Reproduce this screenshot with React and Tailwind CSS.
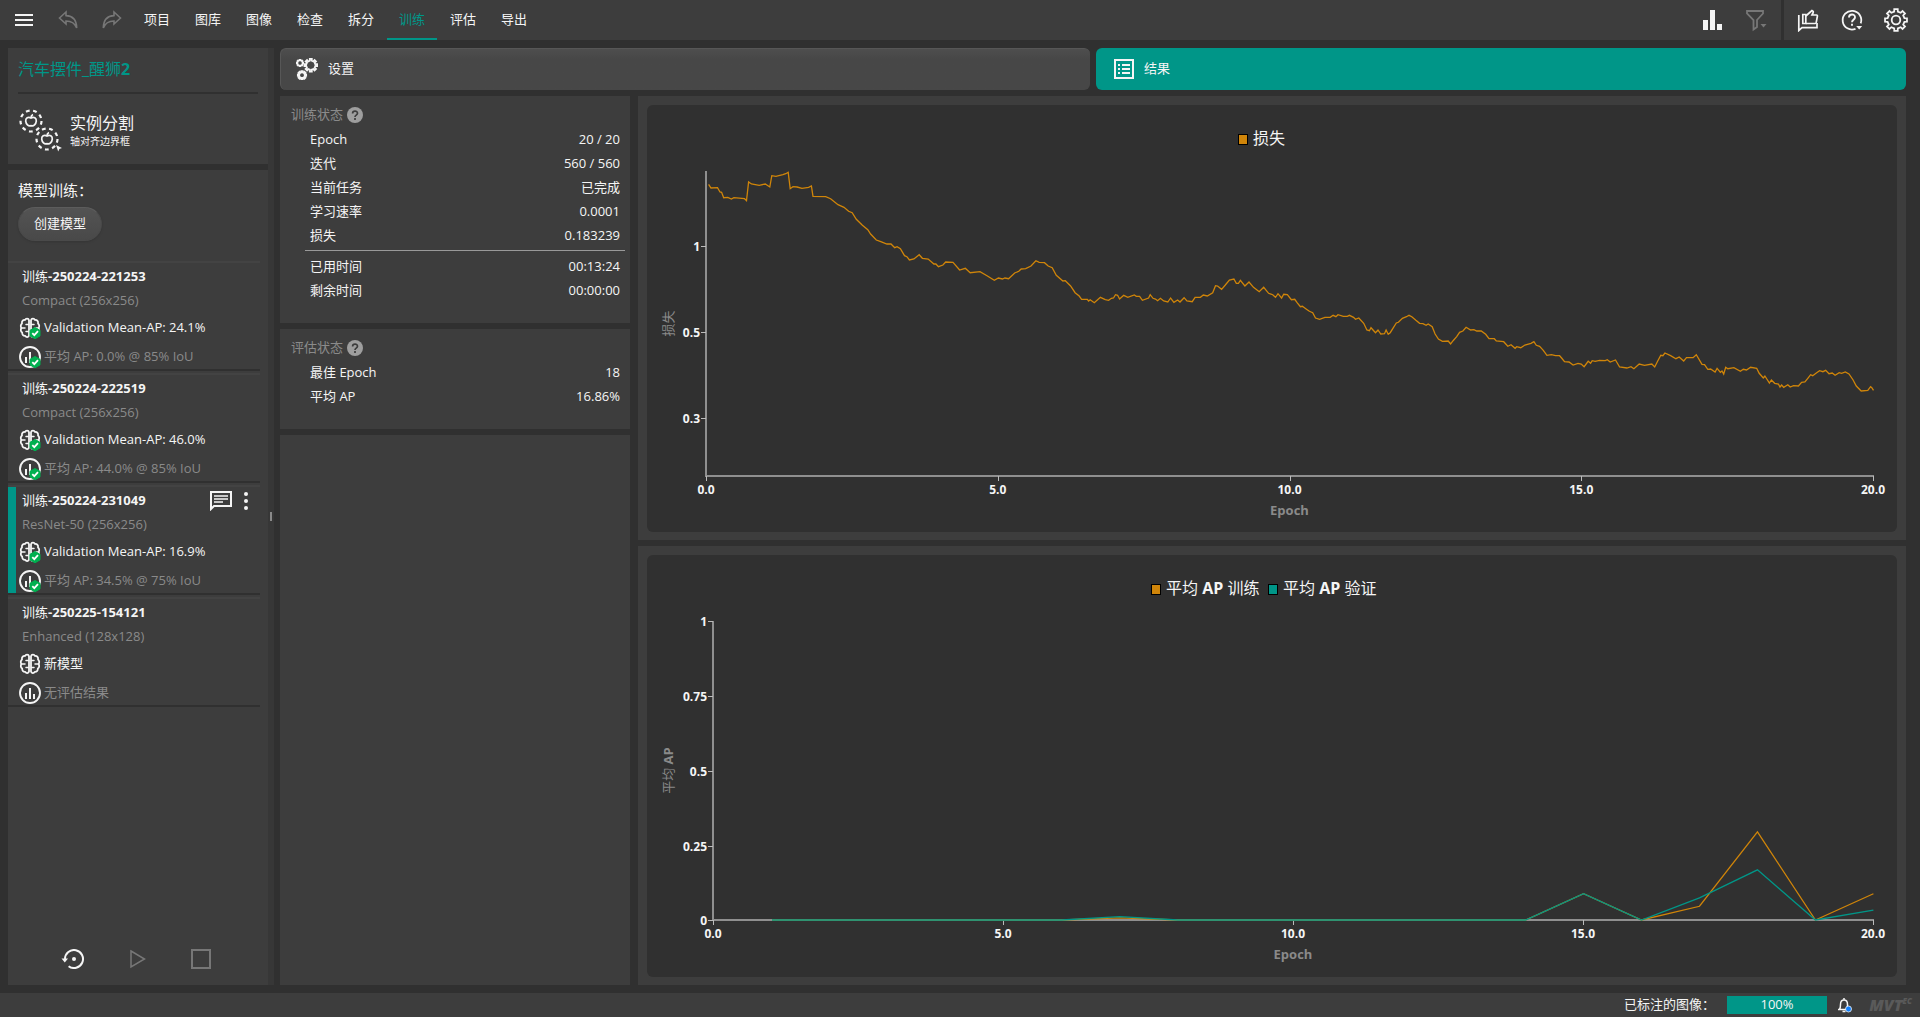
import React from 'react';

const models = [
    { id: '-250224-221253', net: 'Compact (256x256)', best: 'Validation Mean-AP: 24.1%', evaluation: '平均 AP: 0.0% @ 85% IoU', done: true },
    { id: '-250224-222519', net: 'Compact (256x256)', best: 'Validation Mean-AP: 46.0%', evaluation: '平均 AP: 44.0% @ 85% IoU', done: true },
    { id: '-250224-231049', net: 'ResNet-50 (256x256)', best: 'Validation Mean-AP: 16.9%', evaluation: '平均 AP: 34.5% @ 75% IoU', done: true, selected: true },
    { id: '-250225-154121', net: 'Enhanced (128x128)', best: '新模型', evaluation: '无评估结果', done: false },
];

const navItems = ['项目', '图库', '图像', '检查', '拆分', '训练', '评估', '导出'];

const trainingRows = [
    ['Epoch', '20 / 20'],
    ['迭代', '560 / 560'],
    ['当前任务', '已完成'],
    ['学习速率', '0.0001'],
    ['损失', '0.183239'],
];

const timeRows = [
    ['已用时间', '00:13:24'],
    ['剩余时间', '00:00:00'],
];

const evaluationRows = [
    ['最佳 Epoch', '18'],
    ['平均 AP', '16.86%'],
];

// Smoothed loss per iteration, already projected on the log scale
const lossPoints = `61.6,79.3 64,83 70.5,82.7 73,87 74.6,87.3 76.7,92.7 80.8,92.3 84.4,94 86.9,92.7 97.5,93.7 99.5,95.7
101.6,77 104.4,79 112.2,80.3 118.3,79 122.8,82 124.8,70.7 128.9,71.3 135.9,69.7 138.7,68.7 141.2,67.3 143.2,83.7
146,81.7 150.1,82 155,83.3 161.6,82.3 164.4,81 166,91.3 178.7,91.7 183.6,93.7 191,99.7 197,102.3 201.6,106.3
205.2,107.7 209.3,114.3 215.4,120.3 220.8,124.7 223.6,129 229.3,135 233.8,136.7 239.9,139 244,139 247.7,142.7
250.1,141.7 253.4,143.7 257.5,150.7 259.9,151.7 262.4,155 266.9,154 272.2,149.7 275.4,153.3 281.2,154 286.9,159
288.9,159 291.4,161.7 295.9,160 298.7,157 306,157.3 312.6,165 318.3,163.3 323.2,167.7 333,166.7 340,170.7
347.3,175.3 351.4,173 355.4,174 357.9,173 361.6,173.7 367.7,168 371.8,166.3 374.2,164 378.7,163.7 384,161
388.9,155.7 392.2,157.3 397.5,157.7 401.2,161 405.2,162.7 409.3,170.3 415.9,176 418.3,175.7 423.6,181 428.1,187.7
432.2,191 434.6,194.3 440.3,194.3 441.6,196 443.2,194.7 447.3,197.7 453.4,192.3 458.3,194.7 461.6,195.3 464.4,193.3
466.5,193 468.5,189.7 470.6,190.3 472.6,194 476.7,190.3 480.8,192.3 487.3,190 489.3,191.3 492.6,191.3 495.4,195.3
501.6,193 503.2,189.7 506,193.3 508.5,194 510.6,195.7 513.4,193.3 516.7,196 520.8,197 523.6,193 526.9,197.3
530.6,195 533,197 537.1,192.7 539.9,196 545.2,196.7 548.1,192.3 553.4,192.3 556.3,190 560.3,191 565.7,187.7
568.5,180.7 570.6,181 574.6,184.3 578.3,180 582.4,175 586.9,174 589.3,178.3 591.4,178.3 593.4,175.3 597.9,181
602,177 606.5,182.3 612.2,186.7 616.7,182.3 621.6,188.3 625.7,189.7 628.5,192.3 631,188.7 634.6,193 636.7,189.3
640.3,189.7 644.4,194.7 647.7,194.3 650.1,197.7 653.4,201.7 655.4,201.3 659.1,204 662.4,206.3 665.7,207.7 668.5,213
672.6,214.3 677.9,212.3 683.2,212.3 686.1,210.3 688.9,211.7 691,209.7 696.3,211.3 700.3,211.3 702.4,210.3
706.5,212.3 708.5,214.3 711.8,213 716.7,218.3 719.9,225 722.4,225.7 724,222.7 728.5,227.7 731,225 733.8,229
737.5,228.7 739.1,225 741.2,229.3 743.2,227.7 749.3,218 751.4,217.3 755.4,213.3 759.5,211.7 762,210.3 764.8,211.7
768.9,215.3 772.6,218.3 775.9,218.7 779.1,220.3 781.2,219 785.2,221.7 788.1,229 791.4,234 795.4,236.3 801.2,236
803.6,239 806.1,235.7 809.7,231.7 812.6,227.3 815.9,226 819.1,222.3 823.6,225 826.9,224.7 829.7,226 834.2,226
838.7,229.3 842,233.7 847.3,233.7 849.3,236 856.7,236.7 860.8,241.3 864,239.7 868.1,243.3 869.7,241.7 873.8,242.7
877.9,240 884,238.3 886.9,236.7 889.3,240.3 892.6,241.3 896.3,245.3 899.9,250.3 904.4,249.7 908.5,250.7 912.6,250.7
914.6,253 917.5,256.7 922,257 926.1,260 931,258.3 934.2,259 937.1,261.7 941.2,256.3 943.6,258.3 945.2,255.7
948.1,256.3 952.6,255.3 958.3,255.7 960.3,254.7 963.2,257 968.5,255 972.6,262 979.9,263 984,261.7 986.9,263.7
992.2,259 997.5,260.3 1004.8,259 1007.7,262 1010.6,256.3 1013.8,250.3 1015.9,250.7 1017.9,248 1023.6,250.7
1028.9,253.7 1032.2,252 1036.7,256 1039.5,252.7 1046.1,252.7 1049.3,249.7 1055,259.3 1057.5,259.7 1060.8,264.3
1063.6,264 1068.1,267 1070.1,263.3 1073.4,267.3 1075,266 1076.7,269 1078.7,262.3 1080.8,263.7 1086.9,262.7
1093.4,266.3 1096.3,264.3 1099.5,265 1103.6,262.3 1109.7,263.3 1112.2,268.3 1116.3,273 1117.9,271 1122.4,278
1124.4,275 1127.7,278.3 1131.4,279 1133,282 1134.6,280 1136.7,282.3 1140.8,279.7 1143.2,282 1146.5,280.7
1151.4,281 1154.6,277.3 1157.9,277 1161.6,272.3 1163.6,269.7 1165.7,270.7 1169.3,268 1172.6,265.7 1175.9,266.7
1178.7,265.3 1182,268.7 1185.2,268 1188.1,270.3 1192.2,267.7 1194.6,268.3 1198.3,267 1202,269 1206.1,275
1209.3,281 1214.2,286 1220.8,285.3 1223.6,281.7 1224.8,282.7 1226.5,285.3`;

// Mean AP for epochs 1 to 20
const apTrain = [0, 0, 0, 0, 0, 0, 0.007, 0, 0, 0, 0, 0, 0, 0, 0.088, 0, 0.046, 0.295, 0, 0.088];
const apValidation = [0, 0, 0, 0, 0, 0, 0.011, 0, 0, 0, 0, 0, 0, 0, 0.088, 0, 0.074, 0.168, 0, 0.033];

const apLine = (values) =>
    values.map((v, i) => `${67 + (i + 1) * 57.97},${365 - v * 298.5}`).join(' ');

const CheckBadge = () => (
    <g>
        <path d="M17 11.5l5 2.8v5.6l-5 2.9-5-2.9v-5.6z" fill="#00b050" stroke="#00b050" strokeLinejoin="round" />
        <path d="M14.3 17.2l2 2 3.7-4" fill="none" stroke="#fff" strokeWidth="1.8" />
    </g>
);

const BrainIcon = ({ done }) => (
    <svg className="size-6 shrink-0" viewBox="0 0 24 24" fill="none" aria-hidden="true">
        <g stroke="#f5f5f5" strokeWidth="1.8" strokeLinecap="round" strokeLinejoin="round">
            <path d="M11 4.200C10.500 2.300 7.800 2.200 7 4 4.900 3.700 3.500 5.500 4 7.500 2.600 8.500 2.400 10.700 3.400 12 2.400 13.500 2.700 15.700 4.200 16.600 4 18.800 5.500 20.200 7.300 19.900 8.200 21.700 10.500 21.500 11 19.600z" />
            <path d="M13 4.200C13.500 2.300 16.200 2.200 17 4 19.100 3.700 20.500 5.500 20 7.500 21.400 8.500 21.600 10.700 20.600 12 21.600 13.500 21.300 15.700 19.800 16.600 20 18.800 18.500 20.200 16.700 19.900 15.800 21.700 13.500 21.500 13 19.600z" />
            <path d="M8 8.500h2.500M3.500 12H7M8 15.500h2.500M16 8.500h-2.500M20.500 12H17M16 15.500h-2.500" strokeWidth="1.500" />
        </g>
        {done && <CheckBadge />}
    </svg>
);

const EvaluationIcon = ({ done }) => (
    <svg className="size-6 shrink-0" viewBox="0 0 24 24" fill="none" aria-hidden="true">
        <circle cx="12" cy="12" r="10" stroke="#f5f5f5" strokeWidth="1.9" />
        <path d="M8 12v6M12 7v11M16 13v5" stroke="#f5f5f5" strokeWidth="2" />
        {done && <CheckBadge />}
    </svg>
);

// Toothed wheel outline, used for the settings icons
const gearPath = (cx, cy, outer, inner, teeth) => {
    const step = (Math.PI * 2) / teeth;
    const at = (r, a) => `${(cx + r * Math.sin(a)).toFixed(2)} ${(cy - r * Math.cos(a)).toFixed(2)}`;
    let d = '';
    for (let i = 0; i < teeth; i++) {
        const a = i * step;
        d += `${i ? 'L' : 'M'}${at(inner, a - step * 0.27)}L${at(outer, a - step * 0.2)}L${at(outer, a + step * 0.2)}L${at(inner, a + step * 0.27)}`;
    }
    return d + 'Z';
};

const Header = () => (
    <header className="flex h-10 shrink-0 items-stretch bg-[#3d3d3d]">
        <div className="flex items-center pl-3">
            <button type="button" aria-label="菜单" className="flex w-6 justify-center">
                <svg className="h-3 w-[18px]" viewBox="0 0 18 12" fill="#f5f5f5">
                    <path d="M0 0h18v2H0zM0 5h18v2H0zM0 10h18v2H0z" />
                </svg>
            </button>
            <button type="button" aria-label="撤消" className="ml-5 flex w-6 justify-center">
                <svg className="size-5" viewBox="0 0 20 20" fill="none" stroke="#777" strokeWidth="1.6" strokeLinejoin="miter">
                    <path d="M1.500 8L8 2v3.600c6 .2 10.500 4 10.700 12.400C17 13.500 13 11 8 11v3z" />
                </svg>
            </button>
            <button type="button" aria-label="重做" className="ml-5 flex w-6 justify-center">
                <svg className="size-5" viewBox="0 0 20 20" fill="none" stroke="#777" strokeWidth="1.6" strokeLinejoin="miter">
                    <path d="M18.500 8L12 2v3.600C6 5.800 1.500 9.600 1.300 18 3 13.500 7 11 12 11v3z" />
                </svg>
            </button>
        </div>
        <nav className="ml-2 flex gap-px">
            {navItems.map((item) => (
                <a
                    key={item}
                    href="#"
                    className={`flex w-[50px] items-center justify-center border-b-2 pt-0.5 text-[13px] ${item === '训练' ? 'border-[#009688] text-[#009688]' : 'border-transparent'}`}
                >
                    {item}
                </a>
            ))}
        </nav>
        <div className="ml-auto flex items-center gap-5 pr-[13px]">
            <button type="button" aria-label="统计">
                <svg className="size-6" viewBox="0 0 24 24" fill="#f5f5f5">
                    <path d="M3 12h5v10H3zM10 2h5v20h-5zM17 16h5v6h-5z" />
                </svg>
            </button>
            <button type="button" aria-label="过滤">
                <svg className="size-6" viewBox="0 0 24 24" fill="none">
                    <path d="M3 3h16v2.500l-6 6.500v7l-3.500 2.500V12L3 5.500z" stroke="#777" strokeWidth="1.800" />
                    <path d="M16.500 16h6l-3 3.500z" fill="#777" />
                </svg>
            </button>
        </div>
        <div className="flex items-center gap-5 border-l-[3px] border-[#303030] px-3">
            <button type="button" aria-label="反馈">
                <svg className="size-6" viewBox="0 0 24 24" fill="none" stroke="#f5f5f5" strokeWidth="1.700">
                    <path d="M2.800 7v15.500L6 19.600h15V15" />
                    <path d="M6.800 6.500h3v9h-3z" />
                    <path d="M9.800 8l6.200-5.500c1.500.5 1.500 1.500 1 2.500l-1 2h4.500c.8 0 1 .6.900 1.200l-1.100 6c-.2.900-.7 1.300-1.500 1.300H9.800" />
                </svg>
            </button>
            <button type="button" aria-label="帮助">
                <svg className="size-6" viewBox="0 0 24 24" fill="none">
                    <path d="M15.500 20.800a9.300 9.300 0 1 1 5.200-5.400" stroke="#f5f5f5" strokeWidth="1.800" />
                    <path d="M9 9.500c0-4 6-4 6-.3 0 2.500-3 2.500-3 5M12 15.800v2" stroke="#f5f5f5" strokeWidth="1.900" />
                    <path d="M16.200 18h6l-3 3.500z" fill="#f5f5f5" />
                </svg>
            </button>
            <button type="button" aria-label="首选项">
                <svg className="size-6" viewBox="0 0 24 24" fill="none" stroke="#f5f5f5" strokeWidth="1.800">
                    <path d={gearPath(12, 12, 11.1, 8.6, 8)} />
                    <circle cx="12" cy="12" r="4.300" />
                </svg>
            </button>
        </div>
    </header>
);

const ProjectCard = () => (
    <section className="h-[116px] shrink-0 bg-[#3d3d3d] px-2.5">
        <h1 className="flex h-11 items-center pb-0.5 text-base text-[#009688]">
            <span>汽车摆件_醒狮<b>2</b></span>
        </h1>
        <div className="h-0.5 bg-[#303030]" />
        <div className="mt-3.5 flex items-center gap-2">
            <svg className="size-11" viewBox="0 0 44 44" fill="none" stroke="#f5f5f5" strokeWidth="2.2" aria-hidden="true">
                <circle cx="13" cy="13" r="10.500" strokeDasharray="3.800 3.530" />
                <circle cx="29" cy="31" r="10.500" strokeDasharray="3.800 3.530" />
                <path d="M13 10c-2.800-1.800-5.600.2-5.300 3.200.3 3 2.600 5.400 5.300 4.400 2.700 1 5-1.400 5.300-4.400.3-3-2.500-5-5.300-3.200zM13 10c0-2 .8-3 2-3.500" strokeWidth="1.700" />
                <path d="M29 28c-2.800-1.800-5.600.2-5.300 3.200.3 3 2.600 5.400 5.300 4.400 2.700 1 5-1.400 5.300-4.400.3-3-2.500-5-5.300-3.200zM29 28c0-2 .8-3 2-3.500" strokeWidth="1.700" />
                <path d="M38 37l6 3-2.600.9-1.200 2.600z" fill="#f5f5f5" stroke="none" />
            </svg>
            <div className="pt-0.5">
                <p className="text-base leading-5">实例分割</p>
                <p className="text-[10px] leading-4">轴对齐边界框</p>
            </div>
        </div>
    </section>
);

const ModelItem = ({ model }) => (
    <li className="mb-0.5 border-t-2 border-b-2 border-t-[#434343] border-b-[#303030]">
        <div className={`flex h-[106px] border-l-8 pl-0.5 ${model.selected ? 'border-l-[#009688]' : 'border-l-transparent'}`}>
            <div className="flex-1 text-[13px]">
                <div className="flex h-7 items-center pl-1">
                    <span className="font-bold"><span className="font-normal">训练</span>{model.id}</span>
                    {model.selected && (
                        <span className="ml-auto flex items-center gap-3 pr-3">
                            <button type="button" aria-label="注释">
                                <svg className="h-5 w-[22px]" viewBox="0 0 22 20" fill="none" stroke="#f5f5f5" strokeWidth="2">
                                    <path d="M1 18V1h20v14H4z" strokeLinejoin="miter" />
                                    <path d="M4 5h14M4 8h14M4 11h9" strokeWidth="1.500" />
                                </svg>
                            </button>
                            <button type="button" aria-label="更多">
                                <svg className="h-5 w-1" viewBox="0 0 4 20" fill="#f5f5f5">
                                    <circle cx="2" cy="3" r="2" />
                                    <circle cx="2" cy="10" r="2" />
                                    <circle cx="2" cy="17" r="2" />
                                </svg>
                            </button>
                        </span>
                    )}
                </div>
                <p className="flex h-5 items-center pl-1 text-[#8a8a8a]">{model.net}</p>
                <p className="flex h-[34px] items-center gap-0.5"><BrainIcon done={model.done} />{model.best}</p>
                <p className="flex h-6 items-center gap-0.5 text-[#8a8a8a]"><EvaluationIcon done={model.done} />{model.evaluation}</p>
            </div>
        </div>
    </li>
);

const Sidebar = () => (
    <aside className="flex w-[260px] shrink-0 flex-col gap-1.5">
        <ProjectCard />
        <section className="flex min-h-0 flex-1 flex-col bg-[#3d3d3d]">
            <div className="h-[91px] px-2.5 pt-2">
                <h2 className="mb-[5px] text-[15px] leading-6">模型训练：</h2>
                <button
                    type="button"
                    className="h-[34px] rounded-full border border-[#4a4a4a] border-t-[#5c5c5c] bg-linear-to-b from-[#535353] to-[#494949] px-[15px] text-[13px] shadow"
                >
                    创建模型
                </button>
            </div>
            <ul className="mr-2">
                {models.map((model) => <ModelItem key={model.id} model={model} />)}
            </ul>
            <div className="mt-auto flex items-center gap-[45px] pb-4 pl-[53px]">
                <button type="button" aria-label="重置">
                    <svg className="h-5 w-6" viewBox="0 0 24 20" fill="none">
                        <path d="M4 10a9 9 0 1 1 3.600 7.200" stroke="#f5f5f5" strokeWidth="2" />
                        <path d="M.5 9.500h6.500l-3.200 4z" fill="#f5f5f5" />
                        <circle cx="13" cy="10" r="2" fill="#f5f5f5" />
                    </svg>
                </button>
                <button type="button" aria-label="开始">
                    <svg className="h-5 w-4" viewBox="0 0 16 20" fill="none" stroke="#777" strokeWidth="1.500">
                        <path d="M1 2l13.500 8L1 18z" />
                    </svg>
                </button>
                <button type="button" aria-label="停止">
                    <svg className="size-5" viewBox="0 0 20 20" fill="none" stroke="#777" strokeWidth="2">
                        <path d="M1 1h18v18H1z" />
                    </svg>
                </button>
            </div>
        </section>
    </aside>
);

const StatTitle = ({ children }) => (
    <h3 className="flex h-6 items-center gap-1 pl-[11px] text-[13px] text-[#8a8a8a]">
        {children}
        <svg className="size-4" viewBox="0 0 16 16" aria-hidden="true">
            <circle cx="8" cy="8" r="8" fill="#9e9e9e" />
            <path d="M5.600 6.400c0-3 4.900-3 4.900-.2 0 1.900-2.500 1.900-2.500 3.700M8 11v1.900" fill="none" stroke="#3d3d3d" strokeWidth="1.700" />
        </svg>
    </h3>
);

const StatRows = ({ rows }) => (
    <dl className="pt-px pr-2.5 pl-[30px] text-[13px]">
        {rows.map(([label, value]) => (
            <div key={label} className="flex h-6 items-center justify-between">
                <dt>{label}</dt>
                <dd>{value}</dd>
            </div>
        ))}
    </dl>
);

const Stats = () => (
    <div className="flex w-[350px] shrink-0 flex-col gap-1.5">
        <section className="h-[227px] bg-[#3d3d3d] pt-[7px]">
            <StatTitle>训练状态</StatTitle>
            <StatRows rows={trainingRows} />
            <hr className="mt-0.5 mr-[5px] mb-[3px] ml-[25px] border-[#999]" />
            <StatRows rows={timeRows} />
        </section>
        <section className="h-[100px] bg-[#3d3d3d] pt-[7px]">
            <StatTitle>评估状态</StatTitle>
            <StatRows rows={evaluationRows} />
        </section>
        <section className="flex-1 bg-[#3d3d3d]" />
    </div>
);

const Chart = ({ height, label, left, bottom, xLabel, yTicks, legend, children }) => {
    const step = (1226 - left) / 4;
    return (
        <section className="min-h-0 bg-[#3d3d3d] px-[9px] pt-[9px] pb-2">
            <div className="h-full rounded-md bg-[#303030]">
                <svg className="size-full" viewBox={`0 0 1250 ${height}`} role="img" aria-label={label}>
                    {legend.map(({ x, text, color }) => (
                        <g key={x}>
                            <rect x={x + 0.5} y="29.5" width="9" height="10" fill={color} stroke="#000" />
                            <text x={x + 15} y="39" fill="#f5f5f5" className="text-base">{text}</text>
                        </g>
                    ))}
                    <path d={`M${left} 66V${bottom}H1227`} fill="none" stroke="#8f8f8f" strokeWidth="2" />
                    {yTicks.map(([text, y]) => (
                        <g key={text}>
                            <path d={`M${left - 5} ${y + 0.5}h5`} stroke="#bbb" />
                            <text x={left - 6} y={y + 5} textAnchor="end" fill="#f5f5f5" className="text-xs font-bold">{text}</text>
                        </g>
                    ))}
                    {['0.0', '5.0', '10.0', '15.0', '20.0'].map((text, i) => (
                        <g key={text}>
                            <path d={`M${Math.round(left + i * step) + 0.5} ${bottom}v5`} stroke="#bbb" />
                            <text x={left + i * step} y={bottom + 18} textAnchor="middle" fill="#f5f5f5" className="text-xs font-bold">{text}</text>
                        </g>
                    ))}
                    <text x={(left + 1226) / 2} y={bottom + 39} textAnchor="middle" fill="#8a8a8a" className="text-[13px] font-bold">Epoch</text>
                    <text transform={`translate(26 ${(66 + bottom) / 2}) rotate(-90)`} textAnchor="middle" fill="#8a8a8a" className="text-[13px]">{xLabel}</text>
                    {children}
                </svg>
            </div>
        </section>
    );
};

const Charts = () => (
    <div className="grid min-h-0 min-w-0 flex-1 grid-rows-[444fr_439fr] gap-1.5">
        <Chart
            height={427}
            label="损失"
            left={59}
            bottom={371}
            xLabel="损失"
            yTicks={[['1', 141], ['0.5', 227], ['0.3', 313]]}
            legend={[{ x: 591, text: '损失', color: '#d08509' }]}
        >
            <polyline points={lossPoints} fill="none" stroke="#d08509" strokeWidth="1.300" />
        </Chart>
        <Chart
            height={422}
            label="平均 AP"
            left={66}
            bottom={365}
            xLabel={<>平均 <tspan className="font-bold">AP</tspan></>}
            yTicks={[['1', 66], ['0.75', 141], ['0.5', 216], ['0.25', 291], ['0', 365]]}
            legend={[
                { x: 504, text: <>平均 <tspan className="font-bold">AP</tspan> 训练</>, color: '#d08509' },
                { x: 621, text: <>平均 <tspan className="font-bold">AP</tspan> 验证</>, color: '#009688' },
            ]}
        >
            <polyline points={apLine(apTrain)} fill="none" stroke="#d08509" strokeWidth="1.300" />
            <polyline points={apLine(apValidation)} fill="none" stroke="#009688" strokeWidth="1.300" />
        </Chart>
    </div>
);

const ViewTabs = () => (
    <div className="grid h-[42px] shrink-0 grid-cols-2 gap-1.5 text-[13px]">
        <button type="button" className="flex items-center gap-2.5 rounded-md border-t border-l border-[#575757] bg-linear-to-b from-[#4e4e4e] to-[#474747] to-25% pb-px pl-[15px]">
            <svg className="size-[22px]" viewBox="0 0 22 22" fill="none" stroke="#f5f5f5" strokeWidth="1.800" aria-hidden="true">
                <path d={gearPath(14.8, 7.2, 6.4, 4.6, 8)} />
                <path d={gearPath(6, 17.2, 4.2, 2.8, 8)} />
                <path d={gearPath(4, 5, 3.4, 2.4, 8)} strokeWidth="1.300" />
            </svg>
            设置
        </button>
        <button type="button" className="flex items-center gap-2.5 rounded-md bg-[#009688] pl-[18px]">
            <svg className="size-5" viewBox="0 0 20 20" fill="none" stroke="#f5f5f5" strokeWidth="2" aria-hidden="true">
                <path d="M1 1h18v18H1z" />
                <path d="M4 6h2M4 10h2M4 14h2M8 6h8M8 10h8M8 14h8" />
            </svg>
            结果
        </button>
    </div>
);

const StatusBar = () => (
    <footer className="flex h-6 shrink-0 items-center justify-end bg-[#3d3d3d] pr-2 text-[13px]">
        <span className="mr-3">已标注的图像：</span>
        <div className="flex h-[18px] w-[100px] items-center justify-center bg-[#009688]">100%</div>
        <button type="button" aria-label="通知" className="ml-2.5">
            <svg className="size-4" viewBox="0 0 16 16" fill="none">
                <path d="M1 12.500h9M2.500 12.500c1-1.500 1-3 1-5 0-3 1.500-4.500 3.500-4.500s3.500 1.500 3.500 4.500v3M7 3V1M5.500 14.500h3" stroke="#f5f5f5" strokeWidth="1.500" />
                <circle cx="11.500" cy="12" r="3" fill="#1080ff" stroke="#f5f5f5" strokeWidth=".8" />
            </svg>
        </button>
        <div className="ml-2 flex w-[51px] items-start justify-end font-extrabold whitespace-nowrap text-[#5a5a5a] italic">
            <span className="text-base leading-5">MVT</span>
            <span className="text-[8px] leading-3">EC</span>
        </div>
    </footer>
);

const App = () => (
    <div className="flex h-screen flex-col bg-[#303030] font-['Open_Sans','Noto_Sans_CJK_SC',sans-serif] text-[#f5f5f5]">
        <Header />
        <main className="flex min-h-0 flex-1 py-2 pr-3.5 pl-2">
            <Sidebar />
            <div className="mr-1.5 flex w-1.5 shrink-0 items-center justify-center bg-[#373737]">
                <div className="h-[9px] w-0.5 bg-[#8a8a8a]" />
            </div>
            <div className="flex min-w-0 flex-1 flex-col gap-1.5">
                <ViewTabs />
                <div className="flex min-h-0 flex-1 gap-2">
                    <Stats />
                    <Charts />
                </div>
            </div>
        </main>
        <StatusBar />
    </div>
);

export default App;
